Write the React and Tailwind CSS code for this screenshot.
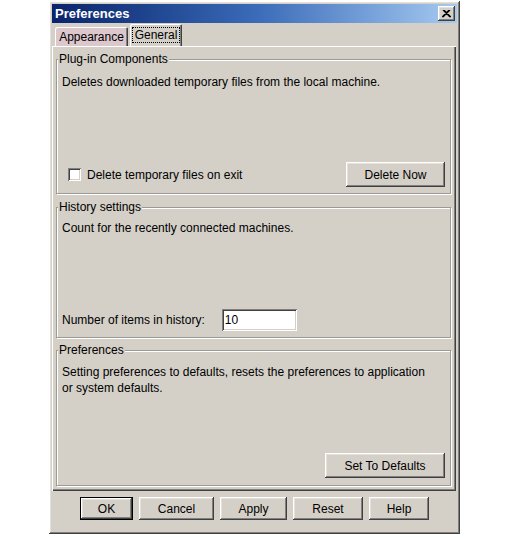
import React from 'react';

const raised =
  'shadow-[inset_-1px_-1px_#404040,inset_1px_1px_#ffffff,inset_-2px_-2px_#808080,inset_2px_2px_#e4e1da]';
const sunken =
  'shadow-[inset_1px_1px_#808080,inset_-1px_-1px_#ffffff,inset_2px_2px_#404040,inset_-2px_-2px_#d4d0c8]';

function Button({ label, className = '', isDefault = false }) {
  return (
    <button
      className={`flex h-[23px] items-center justify-center bg-[#d4d0c8] text-[12px] text-black ${
        isDefault ? 'border border-black' : ''
      } ${raised} ${className}`}
    >
      {label}
    </button>
  );
}

function Group({ title, className = '', bodyClass = '', children }) {
  return (
    <fieldset
      className={`mx-[4px] mr-[5px] border border-[#9c9a94] px-[5px] shadow-[1px_1px_0_#ffffff,inset_1px_1px_0_#ffffff] ${className}`}
    >
      <legend className="ml-[-4px] bg-[#d4d0c8] px-[1px] text-[12px] leading-[14px]">{title}</legend>
      <div className={`flex flex-col ${bodyClass}`}>{children}</div>
    </fieldset>
  );
}

function App() {
  return (
    <div className="h-[538px] w-[525px] bg-white font-['Liberation_Sans',Arial,sans-serif] text-[12px] text-black">
      <div className="pt-[1px]">
        <div className={`ml-[49px] flex h-[533px] w-[411px] flex-col bg-[#d4d0c8] p-[3px] ${raised}`}>
          {/* title bar */}
          <div className="flex h-[19px] items-center justify-between bg-linear-to-r from-[#0a246a] via-[#3a6ab8] to-[#a6caf0] pl-[3px] pr-[2px]">
            <span className="text-[13px] font-bold leading-none text-white">Preferences</span>
            <div className={`flex h-[15px] w-[17px] items-center justify-center bg-[#d4d0c8] ${raised}`}>
              <svg width="9" height="8" viewBox="0 0 9 8">
                <path d="M1 0 L8 7 M8 0 L1 7 M2 0 L9 7 M7 0 L0 7" stroke="#000" strokeWidth="1.1" />
              </svg>
            </div>
          </div>

          {/* tabs */}
          <div className="relative z-10 mt-[2px] flex h-[21px] items-end pl-[3px]">
            <div className="flex h-[19px] w-[73px] items-center justify-center rounded-t-[2px] bg-[#dcc7cd] shadow-[inset_1px_1px_#ffffff,inset_-1px_0_#404040,inset_-2px_0_#808080]">
              Appearance
            </div>
            <div className="ml-[2px] flex h-[22px] w-[52px] items-center justify-center rounded-t-[2px] bg-[#d4d0c8] shadow-[inset_1px_1px_#ffffff,inset_-1px_0_#404040,inset_-2px_0_#808080]">
              <span className="border border-dotted border-black px-[2px] leading-[14px]">General</span>
            </div>
          </div>

          {/* tab panel */}
          <div className="mr-[1px] flex h-[445px] flex-col pb-[4px] pt-[6px] shadow-[inset_1px_1px_#ffffff,inset_-1px_-1px_#404040,inset_-2px_-2px_#808080]">
            <Group title="Plug-in Components" className="h-[142px] pb-[6px]" bodyClass="h-[121px]">
              <p className="mt-[9px] leading-[14px]">Deletes downloaded temporary files from the local machine.</p>
              <div className="flex-1" />
              <div className="flex items-center justify-between">
                <label className="ml-[6px] flex items-center">
                  <span className={`h-[13px] w-[13px] bg-white ${sunken}`} />
                  <span className="ml-[6px]">Delete temporary files on exit</span>
                </label>
                <Button label="Delete Now" className="h-[25px] w-[99px]" />
              </div>
            </Group>

            <Group title="History settings" className="mt-[6px] h-[138px] pb-[6px]" bodyClass="h-[117px]">
              <p className="mt-[7px] leading-[14px]">Count for the recently connected machines.</p>
              <div className="flex-1" />
              <div className="flex items-center">
                <span>Number of items in history:</span>
                <div className={`ml-[17px] flex h-[22px] w-[75px] items-center bg-white pl-[3px] ${sunken}`}>10</div>
              </div>
            </Group>

            <Group title="Preferences" className="mt-[5px] h-[143px] pb-[7px]" bodyClass="h-[121px]">
              <p className="mt-[7px] leading-[16px]">
                Setting preferences to defaults, resets the preferences to application
                <br />
                or system defaults.
              </p>
              <div className="flex-1" />
              <div className="flex justify-end">
                <Button label="Set To Defaults" className="h-[25px] w-[120px]" />
              </div>
            </Group>
          </div>

          {/* bottom buttons */}
          <div className="mt-[6px] flex justify-center gap-[6px]">
            <Button label="OK" isDefault className="w-[53px]" />
            <Button label="Cancel" className="w-[75px]" />
            <Button label="Apply" className="w-[67px]" />
            <Button label="Reset" className="w-[70px]" />
            <Button label="Help" className="w-[60px]" />
          </div>
        </div>
      </div>
    </div>
  );
}

export default App;
